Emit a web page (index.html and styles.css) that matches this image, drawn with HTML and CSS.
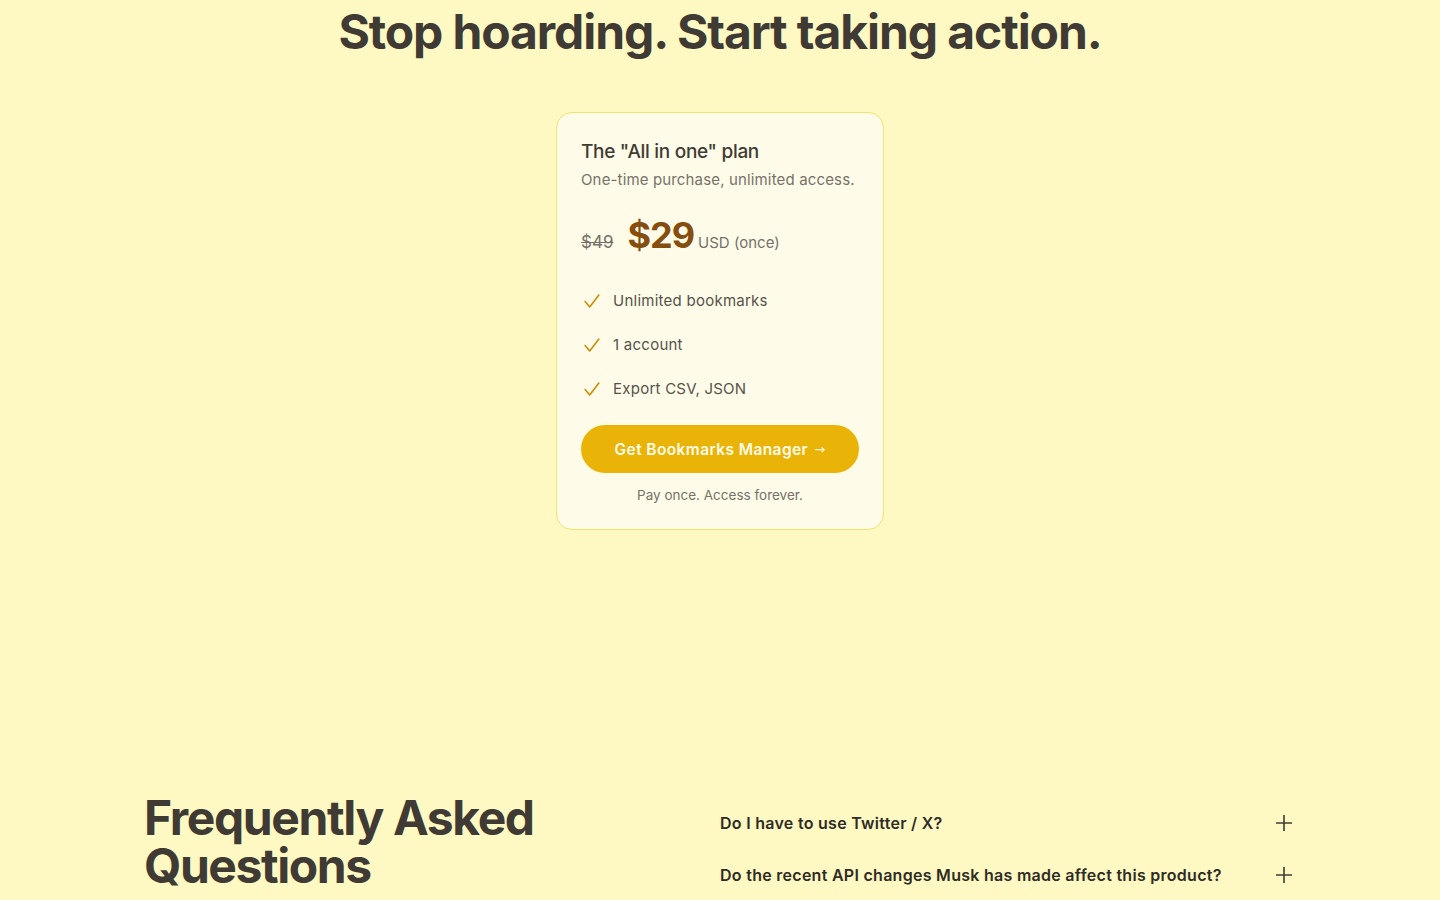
FILE: index.html
```html
<!DOCTYPE html>
<html lang="en">
<head>
<meta charset="utf-8">
<title>Pricing</title>
<link rel="stylesheet" href="styles.css">
</head>
<body>
<section class="pricing">
  <h1 class="headline">Stop hoarding. Start taking action.</h1>
  <div class="card">
    <h2 class="plan-title">The "All in one" plan</h2>
    <p class="plan-sub">One-time purchase, unlimited access.</p>
    <div class="price-row">
      <span class="old-price">$49</span>
      <span class="price">$29</span>
      <span class="currency">USD (once)</span>
    </div>
    <ul class="features">
      <li class="feature"><svg class="check" viewBox="0 0 24 24" width="22" height="22"><path d="M4.5 12.5 L9.5 18.5 L19.5 5.5" fill="none" stroke="currentColor" stroke-width="1.7" stroke-linecap="round" stroke-linejoin="round"/></svg><span>Unlimited bookmarks</span></li>
      <li class="feature"><svg class="check" viewBox="0 0 24 24" width="22" height="22"><path d="M4.5 12.5 L9.5 18.5 L19.5 5.5" fill="none" stroke="currentColor" stroke-width="1.7" stroke-linecap="round" stroke-linejoin="round"/></svg><span>1 account</span></li>
      <li class="feature"><svg class="check" viewBox="0 0 24 24" width="22" height="22"><path d="M4.5 12.5 L9.5 18.5 L19.5 5.5" fill="none" stroke="currentColor" stroke-width="1.7" stroke-linecap="round" stroke-linejoin="round"/></svg><span>Export CSV, JSON</span></li>
    </ul>
    <a class="cta" href="#">Get Bookmarks Manager <span class="arrow">→</span></a>
    <p class="footnote">Pay once. Access forever.</p>
  </div>
</section>
<section class="faq">
  <h2 class="faq-title">Frequently Asked Questions</h2>
  <div class="faq-list">
    <div class="faq-item"><span>Do I have to use Twitter / X?</span><svg class="plus" viewBox="0 0 20 20" width="20" height="20"><path d="M10 2v16M2 10h16" stroke="currentColor" stroke-width="1.6" fill="none"/></svg></div>
    <div class="faq-item"><span>Do the recent API changes Musk has made affect this product?</span><svg class="plus" viewBox="0 0 20 20" width="20" height="20"><path d="M10 2v16M2 10h16" stroke="currentColor" stroke-width="1.6" fill="none"/></svg></div>
  </div>
</section>
</body>
</html>
```

FILE: styles.css
```css
* { box-sizing: border-box; }
html, body { margin: 0; padding: 0; }
body {
  background: #fef9c3;
  color: #3f3b34;
  font-family: "Inter", "Open Sans", sans-serif;
  height: 900px;
  overflow: hidden;
}
.pricing {
  display: flex;
  flex-direction: column;
  align-items: center;
}
.headline {
  margin: 4px 0 0;
  font-size: 48px;
  line-height: 56px;
  font-weight: 700;
  letter-spacing: -1.1px;
  color: #3f3b34;
}
.card {
  margin-top: 52px;
  width: 328px;
  background: #fefce8;
  border: 1px solid #f5e26a;
  border-radius: 16px;
  padding: 26px 24px 26px;
}
.plan-title {
  margin: 0;
  font-size: 19px;
  line-height: 26px;
  font-weight: 500;
  letter-spacing: -0.3px;
  color: #3f3b34;
}
.plan-sub {
  margin: 4px 0 0;
  font-size: 15px;
  line-height: 22px;
  color: #77716a;
  letter-spacing: 0.15px;
}
.price-row {
  display: flex;
  align-items: baseline;
  margin-top: 22px;
}
.old-price {
  font-size: 17px;
  color: #77716a;
  text-decoration: line-through;
  margin-right: 14px;
}
.price {
  font-size: 36px;
  line-height: 44px;
  font-weight: 700;
  color: #854d0e;
  letter-spacing: -1px;
  margin-right: 4px;
}
.currency {
  font-size: 15px;
  color: #77716a;
  letter-spacing: 0;
}
.features {
  list-style: none;
  margin: 33px 0 0;
  padding: 0;
  display: flex;
  flex-direction: column;
  gap: 22px;
}
.feature {
  display: flex;
  align-items: center;
  gap: 10px;
  font-size: 15px;
  line-height: 22px;
  color: #57524a;
  letter-spacing: 0.25px;
}
.check { color: #ca8a04; flex: none; }
.cta {
  margin-top: 25px;
  display: flex;
  align-items: center;
  justify-content: center;
  gap: 6px;
  height: 48px;
  border-radius: 999px;
  background: #eab308;
  color: #fefce8;
  font-size: 15.5px;
  font-weight: 600;
  text-decoration: none;
  letter-spacing: 0.4px;
}
.arrow { font-family: "DejaVu Sans", sans-serif; font-size: 13px; font-weight: 400; }
.footnote {
  margin: 14px 0 0;
  text-align: center;
  font-size: 13.5px;
  color: #77716a;
  letter-spacing: 0;
}
.faq {
  width: 1152px;
  margin: 264px auto 0;
  display: grid;
  grid-template-columns: 1fr 1fr;
}
.faq-title {
  margin: 0;
  font-size: 48px;
  line-height: 48px;
  font-weight: 700;
  letter-spacing: -1.4px;
  color: #3f3b34;
  max-width: 440px;
}
.faq-list {
  display: flex;
  flex-direction: column;
  gap: 30px;
  padding-top: 18px;
}
.faq-item {
  display: flex;
  justify-content: space-between;
  align-items: center;
  font-size: 16px;
  line-height: 22px;
  font-weight: 600;
  color: #2f2b25;
  letter-spacing: 0.28px;
  padding-right: 2px;
}
.plus { color: #3f3b34; flex: none; }
```
